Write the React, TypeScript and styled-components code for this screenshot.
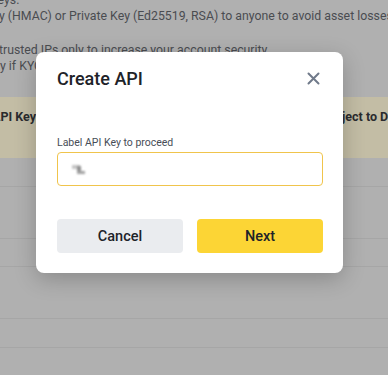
import React from "react";
import styled, { createGlobalStyle } from "styled-components";

const Global = createGlobalStyle`
  html, body { margin: 0; padding: 0; }
  body {
    background: #b0b0b0;
    font-family: Roboto, "Liberation Sans", sans-serif;
    width: 388px;
    height: 375px;
    overflow: hidden;
  }
`;

const Page = styled.div`
  position: relative;
  width: 388px;
  height: 375px;
  overflow: hidden;
  background: #b0b0b0;
`;

const Notes = styled.div`
  display: flex;
  flex-direction: column;
  margin-top: -8px;
`;

const NoteLine = styled.div<{ $indent?: number; $gap?: number }>`
  height: 16px;
  line-height: 16px;
  font-size: 12.3px;
  color: #4a4c50;
  white-space: nowrap;
  margin-left: ${(p) => p.$indent ?? 0}px;
  margin-top: ${(p) => p.$gap ?? 0}px;
`;

const Band = styled.div`
  margin-top: 23px;
  height: 61px;
  background: #c3bda5;
  display: flex;
  align-items: flex-start;
  justify-content: space-between;
  padding-top: 12px;
  box-sizing: border-box;
  font-size: 12.5px;
  font-weight: 700;
  color: #2a2b2e;
  white-space: nowrap;
`;

const BandLeft = styled.span`
  margin-left: -8px;
`;

const BandRight = styled.span`
  margin-right: -7px;
`;

const Rows = styled.div`
  display: flex;
  flex-direction: column;
`;

const Row = styled.div<{ $h: number }>`
  height: ${(p) => p.$h}px;
  box-sizing: border-box;
  border-bottom: 1px solid #a6a6a6;
`;

const Overlay = styled.div`
  position: absolute;
  inset: 0;
  display: flex;
  align-items: flex-start;
  justify-content: flex-start;
  padding: 52px 0 0 36px;
  box-sizing: border-box;
`;

const Modal = styled.div`
  width: 307px;
  box-sizing: border-box;
  background: #ffffff;
  border-radius: 8px;
  padding: 14px 20px 20px 21px;
  box-shadow: 0 6px 22px rgba(0, 0, 0, 0.22);
  display: flex;
  flex-direction: column;
`;

const Header = styled.div`
  height: 24px;
  display: flex;
  align-items: center;
  justify-content: space-between;
`;

const Title = styled.h2`
  margin: 0;
  font-size: 18px;
  font-weight: 500;
  color: #1e2329;
`;

const CloseButton = styled.button`
  border: 0;
  background: none;
  padding: 0;
  width: 16px;
  height: 16px;
  margin-right: 2px;
  display: flex;
  align-items: center;
  justify-content: center;
  cursor: pointer;
`;

const Label = styled.label`
  margin-top: 45px;
  font-size: 10.5px;
  line-height: 16px;
  color: #474d57;
`;

const InputBox = styled.div`
  margin-top: 1px;
  height: 34px;
  box-sizing: border-box;
  border: 1px solid #f0c44c;
  border-radius: 4px;
  display: flex;
  align-items: center;
  padding-left: 12px;
`;

const Buttons = styled.div`
  margin-top: 33px;
  display: grid;
  grid-template-columns: 1fr 1fr;
  gap: 14px;
`;

const Button = styled.button<{ $primary?: boolean }>`
  height: 34px;
  border: 0;
  border-radius: 4px;
  font-family: Roboto, "Liberation Sans", sans-serif;
  font-size: 14.5px;
  font-weight: 500;
  color: #1e2329;
  background: ${(p) => (p.$primary ? "#fcd535" : "#eaecef")};
  cursor: pointer;
`;

const Smudge = () => (
  <svg width="18" height="14" viewBox="0 0 18 14">
    <defs>
      <filter id="b" x="-50%" y="-50%" width="200%" height="200%">
        <feGaussianBlur stdDeviation="0.9" />
      </filter>
    </defs>
    <g filter="url(#b)">
      <rect x="2" y="3" width="8" height="4" fill="#c4c4c4" />
      <rect x="7" y="4" width="4" height="8" fill="#8e8e8e" />
      <rect x="7" y="9" width="8" height="3" fill="#a2a2a2" />
    </g>
  </svg>
);

const CloseIcon = () => (
  <svg width="13" height="13" viewBox="0 0 13 13">
    <path d="M1.5 1.5 L11.5 11.5 M11.5 1.5 L1.5 11.5" stroke="#707a8a" strokeWidth="2" strokeLinecap="round" />
  </svg>
);

export default function App() {
  return (
    <>
      <Global />
      <Page>
        <Notes>
          <NoteLine $indent={-10}>Keys.</NoteLine>
          <NoteLine $indent={-15}>Key (HMAC) or Private Key (Ed25519, RSA) to anyone to avoid asset losses. You should</NoteLine>
          <NoteLine $indent={-15} $gap={18}>to trusted IPs only to increase your account security.</NoteLine>
          <NoteLine $indent={-3}>ly if KYC is completed.</NoteLine>
        </Notes>
        <Band>
          <BandLeft>API Keys</BandLeft>
          <BandRight>Subject to De</BandRight>
        </Band>
        <Rows>
          <Row $h={29} />
          <Row $h={52} />
          <Row $h={28} />
          <Row $h={52} />
          <Row $h={29} />
        </Rows>
        <Overlay>
          <Modal role="dialog" aria-label="Create API">
            <Header>
              <Title>Create API</Title>
              <CloseButton aria-label="Close">
                <CloseIcon />
              </CloseButton>
            </Header>
            <Label>Label API Key to proceed</Label>
            <InputBox>
              <Smudge />
            </InputBox>
            <Buttons>
              <Button>Cancel</Button>
              <Button $primary>Next</Button>
            </Buttons>
          </Modal>
        </Overlay>
      </Page>
    </>
  );
}
